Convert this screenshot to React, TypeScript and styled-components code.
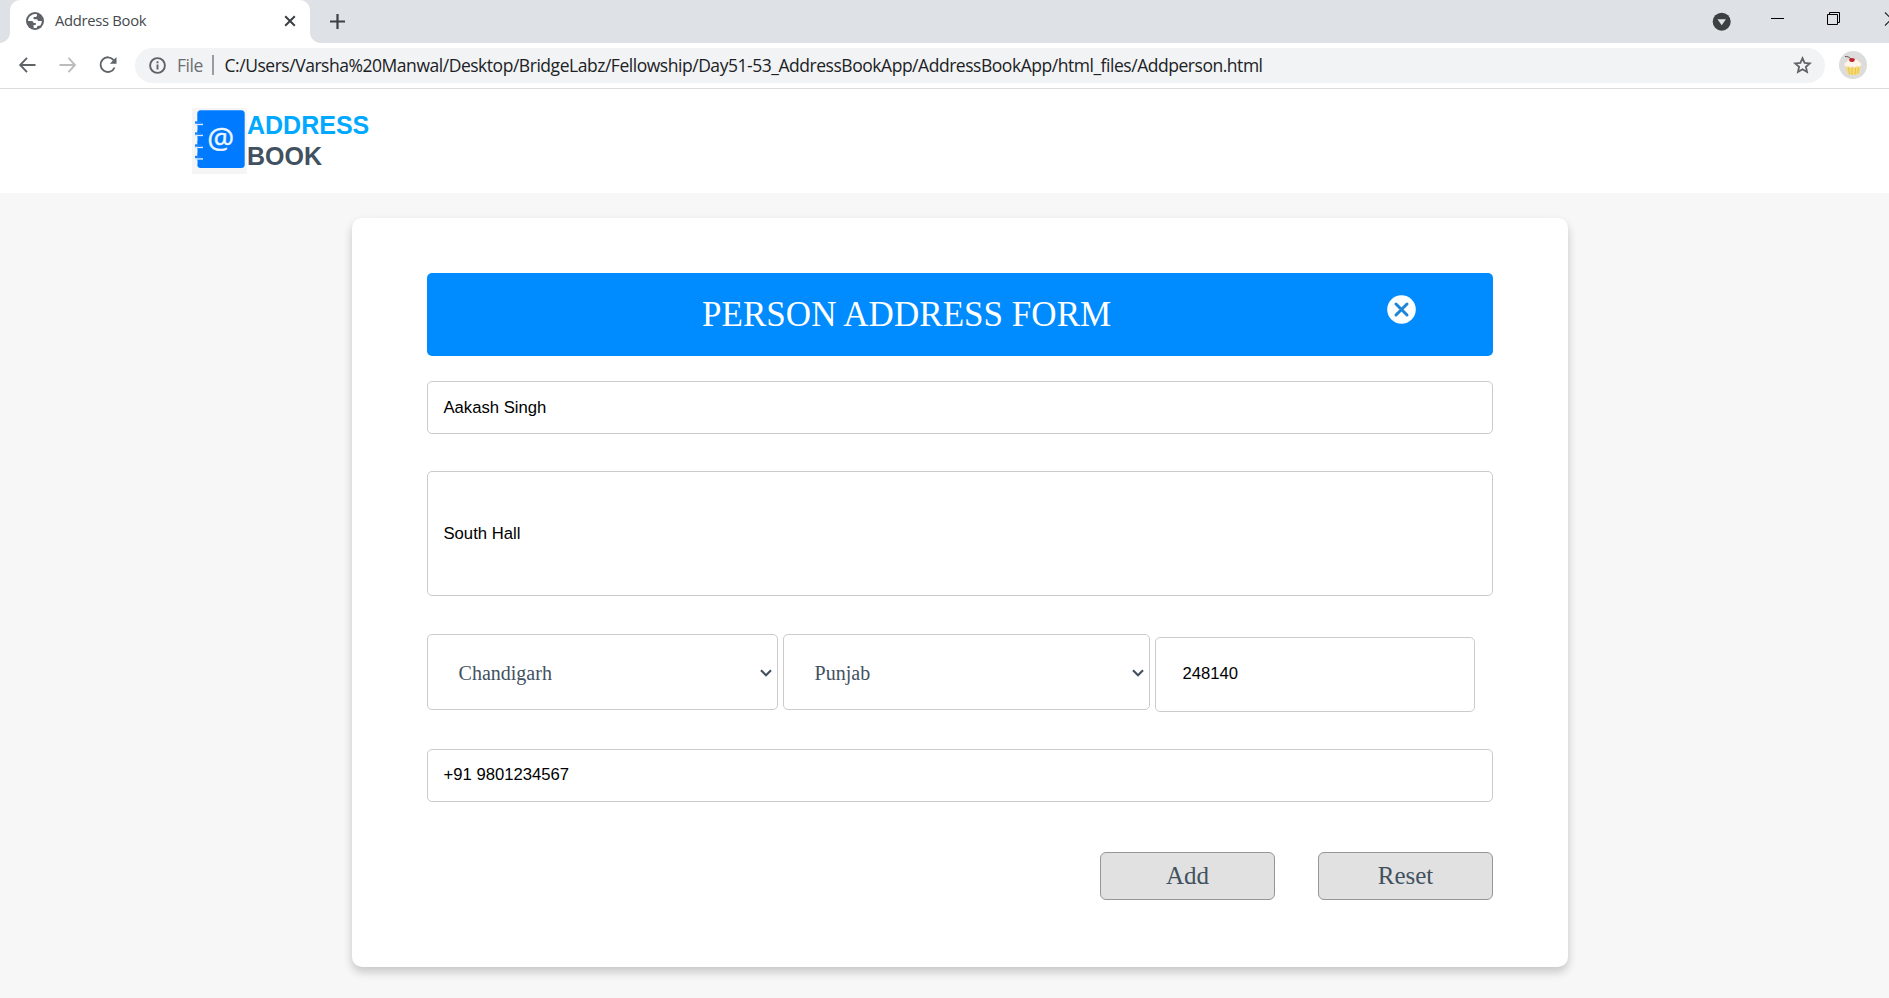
import React from 'react';
import styled, { createGlobalStyle } from 'styled-components';

const GlobalStyle = createGlobalStyle`
  * { box-sizing: border-box; }
  html, body { margin: 0; padding: 0; overflow: hidden; background: #f6f6f6; }
`;

const uiFont = '"Open Sans", "Noto Sans", sans-serif';
const sans = '"Liberation Sans", Arial, sans-serif';
const serif = '"Liberation Serif", "Times New Roman", serif';

const Window = styled.div`
  display: flex;
  flex-direction: column;
  width: 1889px;
  height: 998px;
  overflow: hidden;
  background: #f7f7f7;
`;

/* ---------- browser chrome ---------- */

const TabStrip = styled.div`
  display: flex;
  align-items: stretch;
  height: 43px;
  flex: none;
  padding-left: 10px;
  background: #dee1e6;
`;

const Tab = styled.div`
  position: relative;
  display: flex;
  align-items: center;
  width: 300px;
  padding: 0 14px 1px 16px;
  border-radius: 10px 10px 0 0;
  background: #fff;
  &::before,
  &::after {
    content: '';
    position: absolute;
    bottom: 0;
    width: 10px;
    height: 10px;
  }
  &::before {
    left: -10px;
    background: radial-gradient(circle at 0 0, transparent 9.5px, #fff 10px);
  }
  &::after {
    right: -10px;
    background: radial-gradient(circle at 100% 0, transparent 9.5px, #fff 10px);
  }
`;

const TabTitle = styled.span`
  flex: 1;
  margin-left: 11px;
  padding-bottom: 2px;
  font: 400 14.8px/20px ${uiFont};
  letter-spacing: -0.3px;
  color: #45494d;
  white-space: nowrap;
`;

const Icon = styled.svg`
  display: block;
  flex: none;
  overflow: visible;
`;

const NewTab = styled.div`
  display: flex;
  align-items: center;
  margin-left: 20px;
`;

const WindowControls = styled.div`
  display: flex;
  align-items: flex-start;
  width: 178px;
  margin-left: auto;
`;

const Toolbar = styled.div`
  display: flex;
  align-items: center;
  flex: none;
  height: 46px;
  padding: 0 22px 1px 19px;
  background: #fff;
  border-bottom: 1px solid #d9dbde;
`;

const NavButtons = styled.div`
  display: flex;
  align-items: center;
  gap: 23px;
  width: 116px;
`;

const Omnibox = styled.div`
  display: flex;
  align-items: center;
  flex: 1;
  height: 35px;
  padding: 0 13px 0 14px;
  border-radius: 18px;
  background: #f1f3f4;
  font: 400 17.5px/24px ${uiFont};
  letter-spacing: -0.465px;
  white-space: nowrap;
`;

const Scheme = styled.span`
  width: 35px;
  margin-left: 11px;
  color: #6b6f74;
`;

const Divider = styled.span`
  width: 2px;
  height: 20px;
  margin-right: 10.500px;
  background: #9a9c9f;
`;

const Url = styled.span`
  flex: 1;
  color: #202124;
`;

const Avatar = styled.div`
  margin-left: 14px;
`;

/* ---------- page ---------- */

const SiteHeader = styled.header`
  display: flex;
  align-items: flex-start;
  flex: none;
  height: 104px;
  padding: 19px 0 0 192px;
  background: #fff;
`;

const Brand = styled.div`
  display: flex;
  flex-direction: column;
  padding-top: 2px;
  font: 700 25px/31px ${sans};
`;

const BrandLine = styled.span<{ $color: string }>`
  color: ${(p) => p.$color};
`;

const Card = styled.main`
  display: flex;
  flex-direction: column;
  flex: none;
  width: 1216px;
  height: 749px;
  margin: 25px 0 0 352px;
  padding: 55px 75px 0;
  border-radius: 10px;
  background: #fff;
  box-shadow: 0 5px 10px rgba(0, 0, 0, 0.2);
`;

const Banner = styled.div`
  display: flex;
  align-items: center;
  height: 83px;
  flex: none;
  padding: 0 77px 0 275px;
  border-radius: 5px;
  background: #008cff;
  color: #fff;
  font: 400 35px/40px ${serif};
  white-space: nowrap;
`;

const BannerTitle = styled.span`
  flex: 1;
  letter-spacing: 0.04px;
`;

const CloseButton = styled.div`
  padding-bottom: 10px;
`;

const Field = styled.div<{ $h: number; $mt: number; $lift?: number }>`
  display: flex;
  align-items: center;
  flex: none;
  height: ${(p) => p.$h}px;
  margin-top: ${(p) => p.$mt}px;
  padding: 0 15.5px ${(p) => p.$lift ?? 0}px;
  border: 1px solid #cbcbcb;
  border-radius: 5px;
  font: 400 16.67px/20px ${sans};
  color: #000;
`;

const FieldRow = styled.div`
  display: flex;
  align-items: flex-start;
  gap: 5px;
  height: 78px;
  flex: none;
  margin-top: 38px;
`;

const Select = styled.div<{ $w: number }>`
  display: flex;
  align-items: center;
  justify-content: space-between;
  width: ${(p) => p.$w}px;
  height: 76px;
  padding: 1px 5px 0 30.6px;
  border: 1px solid #cbcbcb;
  border-radius: 5px;
  font: 400 20px/24px ${serif};
  color: #42515f;
`;

const ZipField = styled(Field)`
  width: 320px;
  padding-left: 26.5px;
`;

const Actions = styled.div`
  display: flex;
  justify-content: flex-end;
  gap: 43px;
  margin-top: 50px;
`;

const ActionButton = styled.div`
  display: flex;
  align-items: center;
  justify-content: center;
  width: 175px;
  height: 48px;
  border: 1px solid #969696;
  border-radius: 6px;
  background: #e1e1e1;
  color: #42515f;
  font: 400 25px/30px ${serif};
`;

const Globe = () => (
  <Icon width="18" height="18" viewBox="0 0 18 18">
    <circle cx="9" cy="9" r="9" fill="#5f6368" />
    <path d="M7.8 2.2C4.6 2.9 2.2 5.6 2 8.9h3.5c1.6 0 2 .9 2 2h2.3v2.2H7.6v2.6c1 .3 2.300.3 3.300 0 .1-1.200.7-1.900 1.700-1.900h1.500c1-1.200 1.700-2.900 1.700-4.700h-2.600c-1.200 0-1.700-.6-1.900-1.900H7.600V5.100h2c.9 0 1.400-.6 1.400-1.500v-1.200C10 2 8.800 2 7.800 2.200Z" fill="#fff" />
    <path d="M9.600 5.100c1 0 1.500-.6 1.500-2 2.600.9 4.200 3 4.500 5.700h-2.300c-1 0-1.400-.7-1.500-1.900H8.400V5.100Z" fill="#5f6368" />
  </Icon>
);

const Chevron = () => (
  <Icon width="12" height="8" viewBox="0 0 12 8" fill="none" stroke="#42515f" strokeWidth="2.2">
    <path d="M1 1.200 6 6.200 11 1.200" />
  </Icon>
);

const AddressBookLogo = () => (
  <Icon width="55" height="66" viewBox="0 0 55 66">
    <rect width="55" height="66" fill="#f5f5f5" />
    <rect x="5.300" y="2.300" width="47.400" height="57.700" rx="3.500" fill="#007bff" />
    {[14.5, 25.5, 37.500, 49].map((y) => (
      <g key={y}>
        <path d={`M2.500 ${y + 1.900}h8.500`} stroke="#d5e8fc" strokeWidth="1.500" />
        <path d={`M3 ${y}h6`} stroke="#1a83fb" strokeWidth="2.400" />
        <path d={`M3 ${y + 3.500}h2.300v4h-2.300z`} fill="#f5f5f5" />
      </g>
    ))}
    <text x="28.800" y="40.500" textAnchor="middle" fontFamily="Open Sans, sans-serif" fontSize="30" fill="#eef6ff" stroke="#eef6ff" strokeWidth=".4">@</text>
  </Icon>
);

const Cupcake = () => (
  <Icon width="28" height="28" viewBox="0 0 28 28">
    <circle cx="14" cy="14" r="14" fill="#dcdcdc" />
    <path d="M6.500 15h15.500l-2 8c-2.800 1.300-8.300 1.300-11 0Z" fill="#f7dc6f" />
    <path d="M9.500 16.500l1 6.500M13 17v6.500M16.500 17l-.3 6.500M19.500 16.500l-1 6" stroke="#e3b94a" strokeWidth=".8" />
    <path d="M5.500 15c-1.200-2 .1-4 2-4.200.5-2 3-3 6.300-3 3.500 0 5.700 1 6.400 3 2.300.4 3.200 2.700 1.500 4.500-1.500 1.400-3.200.3-4.200.3-1.300 1.200-3 1.200-4.200 0-1.300 1.300-3 1-4.100-.1-1.400.8-3 .5-3.700-.5Z" fill="#fff6ea" stroke="#e6cdb6" strokeWidth=".5" />
    <path d="M6 5.500c2.500 0 4.500.5 6 2.500" fill="none" stroke="#56463c" strokeWidth=".9" />
    <ellipse cx="13" cy="9" rx="2.800" ry="1.900" fill="#c32030" />
  </Icon>
);

export default function App() {
  return (
    <Window>
      <GlobalStyle />
      <TabStrip>
        <Tab>
          <Globe />
          <TabTitle>Address Book</TabTitle>
          <Icon width="12" height="12" viewBox="0 0 12 12" stroke="#3c4043" strokeWidth="2">
            <path d="M1.200 1.200 10.800 10.800M10.800 1.200 1.200 10.800" />
          </Icon>
        </Tab>
        <NewTab>
          <Icon width="15" height="15" viewBox="0 0 15 15" stroke="#3c4043" strokeWidth="2.200">
            <path d="M7.500 0v15M0 7.500h15" />
          </Icon>
        </NewTab>
        <WindowControls>
          <Icon width="178" height="43" viewBox="0 0 178 43" fill="none">
            <circle cx="10.700" cy="21.700" r="9" fill="#3c4043" />
            <path d="M6.500 19.200h8.400l-4.200 6Z" fill="#dee1e6" />
            <path d="M60 18.500h13" stroke="#000" />
            <path d="M116.500 14.500h10v10h-10ZM118.500 14.500v-2h10v10h-2" stroke="#000" />
            <path d="M174 12.500 187 25.500M187 12.500 174 25.500" stroke="#222" strokeWidth="1.100" />
          </Icon>
        </WindowControls>
      </TabStrip>

      <Toolbar>
        <NavButtons>
          <Icon width="17" height="16" viewBox="0 0 17 16" fill="none" stroke="#5f6368" strokeWidth="1.900">
            <path d="M8 .8 1.200 8 8 15.200M1.200 8H16.500" />
          </Icon>
          <Icon width="17" height="16" viewBox="0 0 17 16" fill="none" stroke="#babcbe" strokeWidth="1.900">
            <path d="M9.500 .8 16 8l-6.500 7.200M16 8H.5" />
          </Icon>
          <Icon width="18" height="18" viewBox="0 0 18 18" fill="none" stroke="#5f6368" strokeWidth="1.900">
            <path d="M14.700 4.200A7.300 7.300 0 1 0 15.600 11.500" />
            <path d="M17.500 1v6.700h-6.700Z" fill="#5f6368" stroke="none" />
          </Icon>
        </NavButtons>
        <Omnibox>
          <Icon width="17" height="17" viewBox="0 0 17 17" fill="none" stroke="#5f6368" strokeWidth="1.900">
            <circle cx="8.500" cy="8.500" r="7.400" />
            <path d="M8.500 7.600v5M8.500 4.200v2" />
          </Icon>
          <Scheme>File</Scheme>
          <Divider />
          <Url>C:/Users/Varsha%20Manwal/Desktop/BridgeLabz/Fellowship/Day51-53_AddressBookApp/AddressBookApp/html_files/Addperson.html</Url>
          <Icon width="19" height="18" viewBox="0 0 19 18" fill="none" stroke="#5f6368" strokeWidth="1.800">
            <path d="M9.500 2.200 11.600 6.900l5.200.5-3.900 3.400 1.100 5.100-4.500-2.700L5 15.900l1.100-5.100L2.200 7.400l5.200-.5Z" />
          </Icon>
        </Omnibox>
        <Avatar>
          <Cupcake />
        </Avatar>
      </Toolbar>

      <SiteHeader>
        <AddressBookLogo />
        <Brand>
          <BrandLine $color="#00a9ff">ADDRESS</BrandLine>
          <BrandLine $color="#42515f">BOOK</BrandLine>
        </Brand>
      </SiteHeader>

      <Card>
        <Banner>
          <BannerTitle>PERSON ADDRESS FORM</BannerTitle>
          <CloseButton>
            <Icon width="29" height="29" viewBox="0 0 29 29">
              <circle cx="14.500" cy="14.500" r="14.300" fill="#fafeff" />
              <path d="m9 9 11 11M20 9 9 20" stroke="#1d85d8" strokeWidth="3" strokeLinecap="round" />
            </Icon>
          </CloseButton>
        </Banner>
        <Field $h={53} $mt={25}>Aakash Singh</Field>
        <Field $h={125} $mt={37}>South Hall</Field>
        <FieldRow>
          <Select $w={351}>
            Chandigarh
            <Chevron />
          </Select>
          <Select $w={367}>
            Punjab
            <Chevron />
          </Select>
          <ZipField $h={75} $mt={3} $lift={1}>248140</ZipField>
        </FieldRow>
        <Field $h={53} $mt={37} $lift={2}>+91 9801234567</Field>
        <Actions>
          <ActionButton>Add</ActionButton>
          <ActionButton>Reset</ActionButton>
        </Actions>
      </Card>
    </Window>
  );
}
